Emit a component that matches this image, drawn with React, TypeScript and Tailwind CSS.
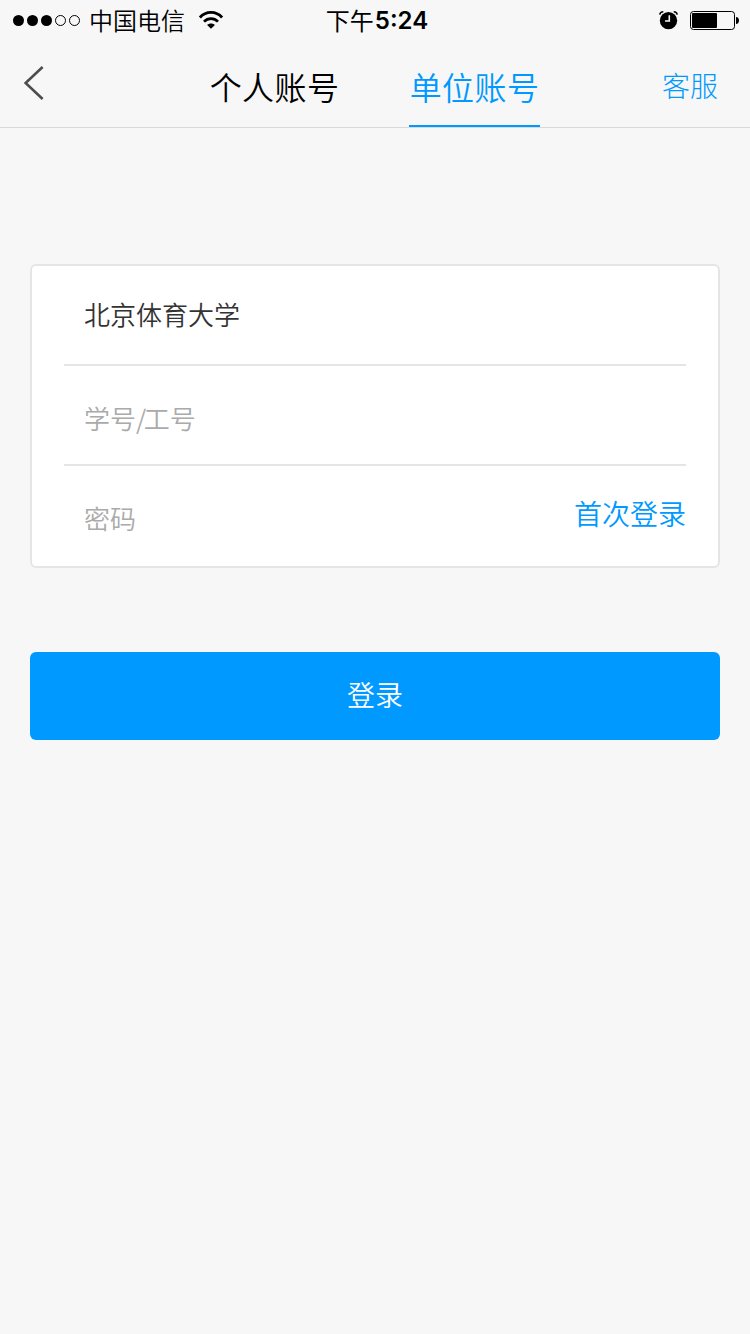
import React, { useState } from 'react';
import { clsx } from 'clsx';

const TABS = [
  { id: 'personal', label: '个人账号' },
  { id: 'company', label: '单位账号' },
];

function SignalDots() {
  return (
    <svg width="68" height="12" viewBox="0 0 68 12" className="shrink-0">
      <circle cx="5.5" cy="6.5" r="5.5" />
      <circle cx="19.5" cy="6.5" r="5.5" />
      <circle cx="33.5" cy="6.5" r="5.5" />
      <circle cx="47.5" cy="6.5" r="5" fill="none" stroke="#000" />
      <circle cx="61.5" cy="6.5" r="5" fill="none" stroke="#000" />
    </svg>
  );
}

function WifiIcon() {
  return (
    <svg width="26" height="20" viewBox="0 0 26 20" fill="none" stroke="#000" className="shrink-0">
      <path d="M1.9 7.4C8 0.7 18 0.7 24.1 7.4" strokeWidth="2.9" />
      <path d="M6 11.6C10 7.5 16 7.5 20 11.6" strokeWidth="2.7" />
      <path d="M13 18.8L9.1 14.9C11.3 12.9 14.7 12.9 16.9 14.9Z" fill="#000" stroke="none" />
    </svg>
  );
}

function AlarmIcon() {
  return (
    <svg width="20" height="20" viewBox="0 0 20 20" fill="none" className="shrink-0">
      <circle cx="10.5" cy="10.6" r="8.7" fill="#000" />
      <path d="M1.8 4.6C2 2.9 3.4 1.7 5.3 1.7M19.2 4.6C19 2.9 17.6 1.7 15.7 1.7" stroke="#000" strokeWidth="1.5" />
      <path d="M11.3 5.3V11H7" stroke="#f7f7f7" strokeWidth="1.6" />
    </svg>
  );
}

function BatteryIcon() {
  return (
    <svg width="50" height="20" viewBox="0 0 50 20" className="shrink-0">
      <rect x="0.5" y="1.5" width="44" height="18" rx="3" fill="none" stroke="#000" />
      <rect x="2" y="3" width="25" height="15" rx="1" />
      <path d="M46 7C48 7.2 49 8.6 49 10.5S48 13.8 46 14Z" />
    </svg>
  );
}

function StatusBar() {
  return (
    <div className="grid h-10 grid-cols-[1fr_auto_1fr] items-center pr-[10px] pl-[13px] text-2xl leading-9 text-black">
      <div className="flex h-10 items-center">
        <SignalDots />
        <span className="ml-2 font-[350]">中国电信</span>
        <span className="ml-[13px]">
          <WifiIcon />
        </span>
      </div>
      <div className="flex items-center pl-px">
        <span>下午</span>
        <span className="pt-0.5 pl-px font-[Inter] font-semibold">5:24</span>
      </div>
      <div className="flex items-center justify-end gap-3">
        <AlarmIcon />
        <BatteryIcon />
      </div>
    </div>
  );
}

export default function App() {
  const [tab, setTab] = useState('company');

  return (
    <div className="min-h-[1334px] w-[750px] bg-[#f7f7f7] font-['Noto_Sans_CJK_SC',sans-serif]">
      <StatusBar />

      <header className="grid h-[88px] grid-cols-[1fr_auto_1fr] border-b border-[#d9d9d9] pr-px">
        <button type="button" aria-label="返回" className="flex items-start pt-[25px] pl-6">
          <svg width="20" height="36" viewBox="0 0 20 36" fill="none" stroke="#4d4d4d" strokeWidth="2.6">
            <path d="M18.6 2L1.6 18L18.6 34" />
          </svg>
        </button>

        <nav className="flex gap-[69px]">
          {TABS.map((t) => (
            <button
              key={t.id}
              type="button"
              onClick={() => setTab(t.id)}
              className={clsx(
                'h-[87px] w-[131px] border-b-2 pt-1 text-center text-[32px] leading-[85px] font-[350] tracking-[0.4px]',
                tab === t.id ? 'border-[#0099ff] text-[#0099ff]' : 'border-transparent text-black',
              )}
            >
              {t.label}
            </button>
          ))}
        </nav>

        <a href="#service" className="pt-1 pr-[31px] text-right text-[28px] leading-[83px] font-light text-[#0099ff]">
          客服
        </a>
      </header>

      <main className="px-[30px] pt-[136px]">
        <div className="rounded-md border-2 border-[#e5e5e5] bg-white px-8">
          <div className="h-[100px] border-b-2 border-[#e5e5e5] pl-5 text-[26px] leading-[96px] font-[350] text-[#333]">
            北京体育大学
          </div>
          <div className="h-[100px] border-b-2 border-[#e5e5e5] pt-1 pl-5 text-[26px] leading-[96px] font-[350] text-[#aaa]">
            学号<span className="tracking-[-2.5px]">/</span>工号
          </div>
          <div className="flex h-[100px] justify-between pl-5">
            <span className="pt-1 text-[26px] leading-[96px] font-[350] text-[#aaa]">密码</span>
            <a href="#first" className="text-[28px] leading-[95px] font-[350] text-[#0099ff]">
              首次登录
            </a>
          </div>
        </div>

        <button
          type="button"
          className="mt-[84px] block h-[88px] w-full rounded-md bg-[#0099ff] pb-1 text-center text-[28px] leading-[84px] font-[350] text-white"
        >
          登录
        </button>
      </main>
    </div>
  );
}
